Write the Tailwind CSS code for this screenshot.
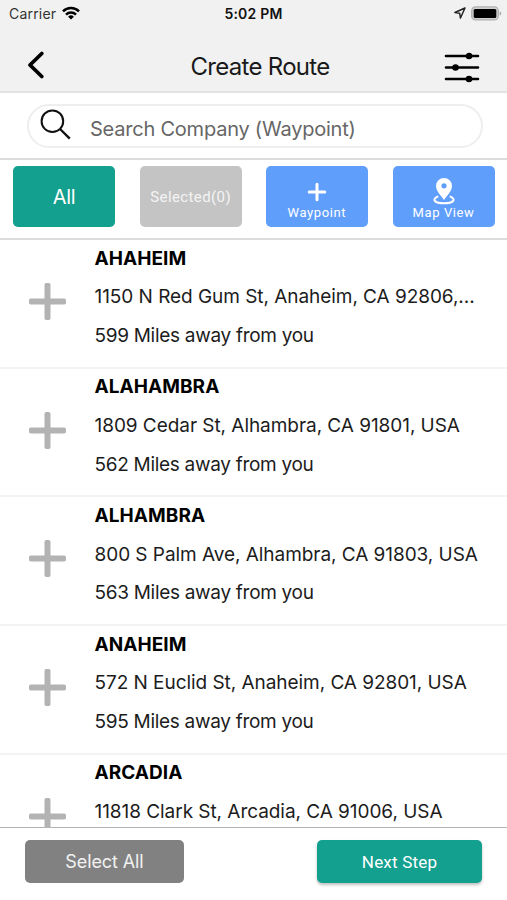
<!DOCTYPE html>
<html lang="en">
<head>
    <meta charset="UTF-8">
    <meta name="viewport" content="width=device-width, initial-scale=1.0">
    <script src="https://cdn.jsdelivr.net/npm/@tailwindcss/browser@4"></script>
    <title>Create Route</title>
</head>
<body class="bg-white">
    <div class="w-[507px] h-[900px] mx-auto flex flex-col overflow-hidden bg-white text-black font-['Inter',sans-serif]">

        <!-- status bar + header -->
        <header class="h-[93px] shrink-0 bg-[#f1f1f1] border-b-2 border-[#e3e3e3]">
            <div class="h-7 grid grid-cols-3 items-center px-[9px] text-sm">
                <div class="flex items-center gap-1.5 text-[#333]">
                    <span class="tracking-[0.2px]">Carrier</span>
                    <svg class="w-[18px] h-[14px] -mt-0.5" viewBox="0 0 18 14" fill="none" stroke="#000" stroke-width="2.5">
                        <path d="M1 5.4a11.3 11.3 0 0 1 16 0" />
                        <path d="M4 8.6a7.1 7.1 0 0 1 10 0" />
                        <path d="M9 13.6 6.1 10.8a4.1 4.1 0 0 1 5.8 0z" fill="#000" stroke="none" />
                    </svg>
                </div>
                <span class="text-center font-semibold tracking-[0.2px] text-[#111]">5:02 PM</span>
                <div class="flex items-center justify-end gap-[5px] -mr-1 -mt-0.5">
                    <svg class="w-3 h-3" viewBox="0 0 12 12" fill="none" stroke="#222" stroke-width="1.4" stroke-linejoin="round">
                        <path d="M11 1 .9 5.5l4.8.8.7 4.8z" />
                    </svg>
                    <svg class="w-[31px] h-[15px]" viewBox="0 0 31 15">
                        <rect x=".7" y=".9" width="26.6" height="13" rx="4" fill="#d0d0d0" stroke="#b0b0b0" stroke-width="1.3" />
                        <rect x="2.7" y="2.9" width="22.6" height="9" rx="1.5" fill="#000" />
                        <path d="M28.6 5.2c2.3.8 2.3 3.6 0 4.4z" fill="#aaa" />
                    </svg>
                </div>
            </div>
            <div class="h-[63px] grid grid-cols-[60px_1fr_60px] items-center pt-3.5">
                <svg class="w-5 h-[30px] ml-[26px] -mt-[3px]" viewBox="0 0 20 30" fill="none" stroke="#000" stroke-width="3.8" stroke-linecap="round" stroke-linejoin="round">
                    <path d="M15.8 3.5 4 15l11.8 11.5" />
                </svg>
                <h1 class="text-center text-2xl tracking-[-0.7px] text-[#1a1a1a] ml-[13px]">Create Route</h1>
                <svg class="w-9 h-8 -ml-[3px] mt-0.5" viewBox="0 0 36 32" fill="#000" stroke="#000" stroke-width="2.6" stroke-linecap="round">
                    <path d="M2 4h32M2 15.5h32M2 27h32" />
                    <circle cx="25" cy="4" r="2.6" stroke-width="1.4" />
                    <circle cx="11.5" cy="15.5" r="2.6" stroke-width="1.4" />
                    <circle cx="25" cy="27" r="2.6" stroke-width="1.4" />
                </svg>
            </div>
        </header>

        <!-- search -->
        <div class="h-[67px] shrink-0 pt-[11px] pl-[27px] pr-6 border-b-2 border-[#dcdcdc]">
            <div class="h-[44px] rounded-full border-2 border-[#eeeeee] flex items-center pl-2.5">
                <svg class="w-8 h-8 -mt-0.5" viewBox="0 0 32 32" fill="none" stroke="#111" stroke-width="2">
                    <circle cx="13.4" cy="12.2" r="10.8" />
                    <path d="m21 20 9.8 9.6" stroke-width="2.4" />
                </svg>
                <span class="ml-[19px] mt-1.5 text-xl tracking-[-0.22px] text-[#666]">Search Company (Waypoint)</span>
            </div>
        </div>

        <!-- filter buttons -->
        <div class="h-[80px] shrink-0 flex justify-between pt-[6px] pl-[13px] pr-3 border-b-2 border-[#dcdcdc] text-white">
            <button class="w-[102px] h-[61px] rounded-[5px] bg-[#14a08f] text-xl tracking-[-0.4px]">All</button>
            <button class="w-[102px] h-[61px] rounded-[5px] bg-[#c4c4c4] text-[15px] tracking-[0.4px] text-[#f4f4f4] font-['Roboto',sans-serif] pt-0.5">Selected(0)</button>
            <button class="w-[102px] h-[61px] rounded-[5px] bg-[#609efb] text-[13px] tracking-[0.6px] leading-4 font-['Roboto',sans-serif] flex flex-col items-center pt-4">
                <svg class="w-5 h-5" viewBox="0 0 20 20" stroke="#fff" stroke-width="3" stroke-linecap="round">
                    <path d="M10 2.2v15.6M2.2 10h15.6" />
                </svg>
                <span class="mt-[3px] -ml-px">Waypoint</span>
            </button>
            <button class="w-[102px] h-[61px] rounded-[5px] bg-[#609efb] text-[13px] tracking-[0.6px] leading-4 font-['Roboto',sans-serif] flex flex-col items-center pt-3">
                <svg class="w-[22px] h-[27px]" viewBox="0 0 22 27" fill="#fff">
                    <path fill-rule="evenodd" d="M11 0a8 8 0 0 0-8 8c0 5 5 9.5 8 14 3-4.5 8-9 8-14a8 8 0 0 0-8-8zm0 5.2a2.6 2.6 0 1 1 0 5.2 2.6 2.6 0 0 1 0-5.2z" />
                    <path d="M4.5 18.6C-1.5 21.5 1.5 25.3 11 25.3s12.5-3.8 6.5-6.7" fill="none" stroke="#fff" stroke-width="2" stroke-linecap="round" />
                </svg>
                <span class="-ml-px">Map View</span>
            </button>
        </div>

        <!-- company list -->
        <ul class="flex-1 min-h-0 overflow-hidden company-list"></ul>

        <!-- bottom bar -->
        <footer class="h-[73px] shrink-0 flex justify-between items-start pt-3 px-[25px] border-t border-[#b5b5b5] text-white">
            <button class="w-[159px] h-[43px] rounded-[5px] bg-[#818181] text-lg tracking-[-0.1px] text-[#f1f1f1]">Select All</button>
            <button class="w-[165px] h-[43px] rounded-[5px] bg-[#14a08f] text-[17px] tracking-[0.2px] font-['Roboto',sans-serif] shadow-[0_2px_3px_rgba(0,0,0,0.25)] pt-0.5">Next Step</button>
        </footer>
    </div>

    <script>
        const list = document.querySelector(".company-list");

        const companies = [
            { name: "AHAHEIM", address: "1150 N Red Gum St, Anaheim, CA 92806,...", distance: "599 Miles away from you" },
            { name: "ALAHAMBRA", address: "1809 Cedar St, Alhambra, CA 91801, USA", distance: "562 Miles away from you" },
            { name: "ALHAMBRA", address: "800 S Palm Ave, Alhambra, CA 91803, USA", distance: "563 Miles away from you" },
            { name: "ANAHEIM", address: "572 N Euclid St, Anaheim, CA 92801, USA", distance: "595 Miles away from you" },
            { name: "ARCADIA", address: "11818 Clark St, Arcadia, CA 91006, USA", distance: "" },
        ];

        for (let i = 0; i < companies.length; i++) {
            list.innerHTML +=
                `<li class="h-[128.7px] flex border-b-2 border-[#f3f3f3] text-[19px] leading-[38.7px] text-[#1c1c1c] whitespace-nowrap">
                    <svg class="w-[37px] h-[37px] ml-[29px] mr-[28.5px] mt-[43px] shrink-0" viewBox="0 0 37 37" fill="#b3b3b3">
                        <rect x="15.5" y="0" width="6" height="37" rx="1.8" />
                        <rect x="0" y="15.5" width="37" height="6" rx="1.8" />
                    </svg>
                    <div class="-mt-[0.5px]">
                        <h2 class="font-bold text-black tracking-[0.05px]">` + companies[i].name + `</h2>
                        <p class="tracking-[-0.05px]">` + companies[i].address + `</p>
                        <p class="tracking-[-0.3px]">` + companies[i].distance + `</p>
                    </div>
                </li>`;
        }
    </script>
</body>
</html>
